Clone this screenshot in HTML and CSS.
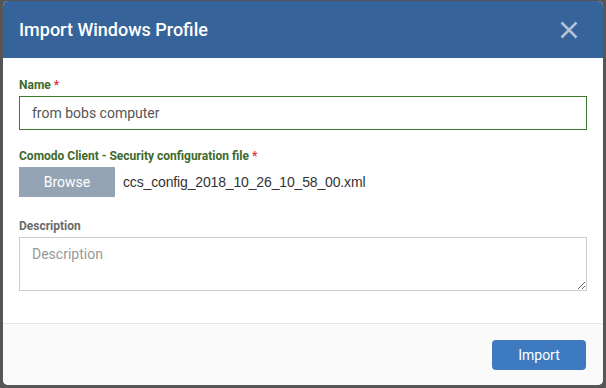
FILE: index.html
```html
<!DOCTYPE html>
<html lang="en">
<head>
    <meta charset="UTF-8">
    <meta name="viewport" content="width=device-width, initial-scale=1.0">
    <title>Import Windows Profile</title>
    <link rel="stylesheet" href="styles.css">
</head>
<body>
    <div class="modal">
        <div class="modal-header">
            <h1>Import Windows Profile</h1>
            <button class="close-button" aria-label="Close">
                <svg width="18" height="18" viewBox="0 0 18 18">
                    <path d="M1.5 1.5 L16.5 16.5 M16.5 1.5 L1.5 16.5" stroke="#b3c2d6" stroke-width="2.5" fill="none"/>
                </svg>
            </button>
        </div>
        <div class="modal-body">
            <div class="field">
                <label class="valid">Name <span class="required">*</span></label>
                <input type="text" class="text-input valid" value="from bobs computer">
            </div>
            <div class="field">
                <label class="valid">Comodo Client - Security configuration file <span class="required">*</span></label>
                <div class="file-row">
                    <button class="browse-button">Browse</button>
                    <span class="file-name">ccs_config_2018_10_26_10_58_00.xml</span>
                </div>
            </div>
            <div class="field">
                <label>Description</label>
                <textarea class="text-area" placeholder="Description"></textarea>
            </div>
        </div>
        <div class="modal-footer">
            <button class="import-button">Import</button>
        </div>
    </div>
</body>
</html>
```

FILE: styles.css
```css
body {
    margin: 0;
    height: 388px;
    background-color: #565656;
    font-family: Roboto, "Liberation Sans", sans-serif;
    overflow: hidden;
}

.modal {
    box-sizing: border-box;
    width: 600px;
    height: 384px;
    margin: 1px 0 0 3px;
    background-color: #ffffff;
    border-radius: 5px;
    overflow: hidden;
    display: flex;
    flex-direction: column;
}

.modal-header {
    height: 57px;
    flex-shrink: 0;
    background-color: #36639a;
    display: flex;
    align-items: center;
    justify-content: space-between;
    padding: 0 25px 0 16px;
}

.modal-header h1 {
    margin: 0;
    font-size: 18px;
    font-weight: 500;
    color: #ffffff;
}

.close-button {
    background: none;
    border: none;
    padding: 0;
    display: flex;
    cursor: pointer;
}

.modal-body {
    flex: 1;
    padding: 18px 16px 0 16px;
}

.field {
    margin-bottom: 17px;
}

.field:nth-child(2) {
    margin-bottom: 20px;
}

.field label {
    display: block;
    font-size: 12px;
    line-height: 18px;
    font-weight: 700;
    color: #6b6b6b;
    margin-bottom: 2px;
}

.field label.valid {
    color: #3d6a2c;
}

.required {
    color: #e0324b;
}

.text-input {
    box-sizing: border-box;
    display: block;
    width: 568px;
    height: 34px;
    padding: 0 12px;
    border: 1px solid #3b7a2e;
    font-family: inherit;
    font-size: 14px;
    color: #555555;
    outline: none;
}

.file-row {
    display: flex;
    align-items: center;
    gap: 8px;
}

.browse-button {
    width: 96px;
    height: 30px;
    border: none;
    background-color: #95a4b4;
    color: #ffffff;
    font-family: inherit;
    font-size: 14px;
    padding: 0;
}

.file-name {
    font-family: "Liberation Sans", Arial, sans-serif;
    font-size: 14px;
    letter-spacing: -0.15px;
    color: #333333;
}

.text-area {
    box-sizing: border-box;
    display: block;
    width: 568px;
    height: 54px;
    padding: 8px 12px;
    border: 1px solid #cccccc;
    font-family: inherit;
    font-size: 14px;
    color: #555555;
    resize: vertical;
}

.text-area::placeholder {
    color: #999999;
}

.modal-footer {
    height: 61px;
    flex-shrink: 0;
    background-color: #fafafa;
    border-top: 1px solid #e5e5e5;
    display: flex;
    align-items: center;
    justify-content: flex-end;
    padding: 0 17px;
}

.import-button {
    width: 94px;
    height: 30px;
    border: none;
    border-radius: 4px;
    background-color: #3e7abf;
    color: #ffffff;
    font-family: inherit;
    font-size: 14px;
    cursor: pointer;
}
```
